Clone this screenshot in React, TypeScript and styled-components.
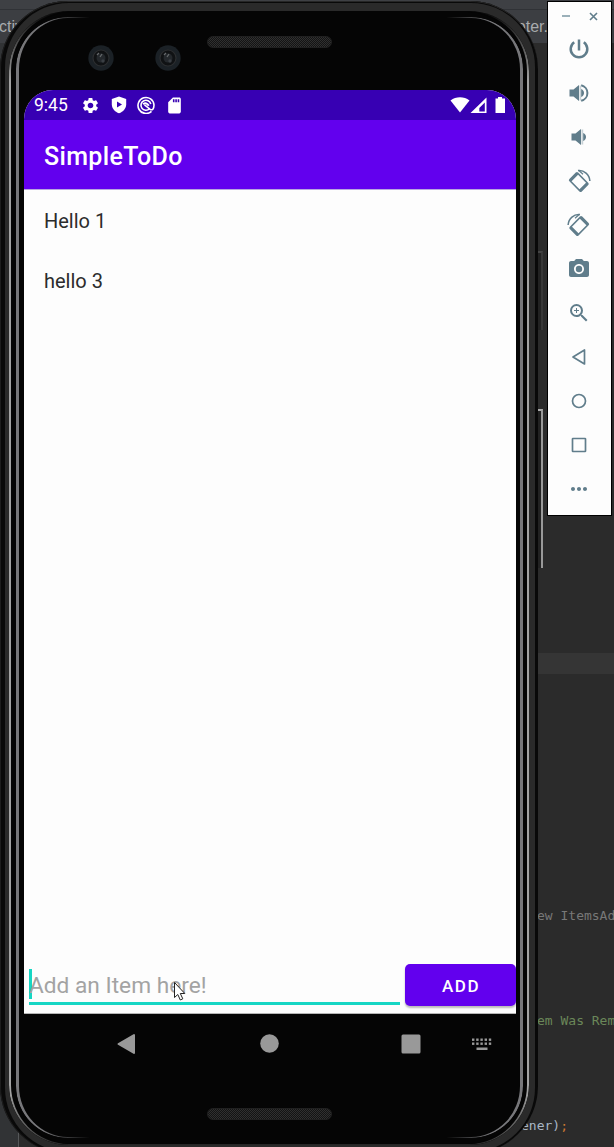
import React from "react";
import styled, { createGlobalStyle } from "styled-components";
import { MdSettings, MdSdCard, MdPhotoCamera, MdZoomIn, MdMoreHoriz } from "react-icons/md";

const GlobalStyle = createGlobalStyle`
  *, *::before, *::after { box-sizing: border-box; }
  body { margin: 0; background: #2b2b2b; }
  svg { display: block; flex: none; }
`;

const Desktop = styled.main`
  position: relative;
  width: 614px;
  height: 1147px;
  overflow: hidden;
  background: #2b2b2b;
  font-family: Roboto, sans-serif;
`;

/* Editor window behind the emulator */
const Editor = styled.div`
  display: flex;
  flex-direction: column;
  height: 100%;
`;

const MenuStrip = styled.div`
  height: 10px;
  background: #3e4044;
  border-bottom: 1px solid #303236;
`;

const TabStrip = styled.div`
  display: flex;
  justify-content: space-between;
  align-items: center;
  height: 33px;
  padding-right: 66px;
  background: #3c3e42;
  color: #a9abad;
  font: 16px/34px "Liberation Sans", sans-serif;
`;

const TabName = styled.span<{ $shift?: number }>`
  margin-left: ${(p) => p.$shift ?? 0}px;
`;

const EditorBody = styled.div`
  display: flex;
  flex: 1;
`;

const Gutter = styled.div`
  flex: none;
  width: 19px;
  background: #313335;
  border-right: 1px solid #555759;
`;

const CodeArea = styled.div`
  flex: 1;
  min-width: 0;
  padding-top: 610px;
  font: 13px/21px "DejaVu Sans Mono", monospace;
  white-space: pre;
`;

const CodeLine = styled.div<{ $indent?: number; $tone?: string; $gap?: number; $active?: boolean }>`
  height: 21px;
  margin-top: ${(p) => p.$gap ?? 0}px;
  padding-left: ${(p) => p.$indent ?? 0}px;
  color: ${(p) => p.$tone ?? "#a9b7c6"};
  background: ${(p) => (p.$active ? "#353535" : "transparent")};
`;

const Semicolon = styled.span`
  color: #cc7832;
`;

/* Phone hardware */
const Phone = styled.section`
  position: absolute;
  left: 0;
  top: 1px;
  width: 538px;
  height: 1153px;
  padding: 2px 3px 2px 5px;
  border-radius: 68px;
  background: #090909;
  box-shadow: inset 1px 0 #1d1d1d, inset 0 1px #262626;
`;

const Rim = styled.div`
  height: 100%;
  padding: 8px 6px 7px 4px;
  border-radius: 64px;
  background: #2a2a2a;
`;

const Edge = styled.div`
  position: relative;
  height: 100%;
  padding: 1px 3px;
  border-radius: 60px;
  background: #050505;

  &::before {
    content: "";
    position: absolute;
    inset: 0;
    border: solid #a3a3a3;
    border-width: 1px 2px;
    border-radius: inherit;
    mask-image: linear-gradient(transparent 0, #0003 14px, #000 70px, #000 1080px, #0007 1122px, #0003 100%);
  }
`;

const Glass = styled.div`
  position: relative;
  display: flex;
  flex-direction: column;
  height: 100%;
  margin: 0 3px 0 4px;
  padding: 0 3px 0 8px;
  border-radius: 56px;
  background: #050505;

  &::before {
    content: "";
    position: absolute;
    inset: 5px 0 6px 0;
    border: solid #77777a;
    border-width: 1px 3px;
    border-radius: 52px;
    mask-image:
      linear-gradient(90deg, #000 26px, transparent 74px, transparent 430px, #000 476px);
  }
`;

const TopBezel = styled.div`
  position: relative;
  height: 78px;
`;

const Lens = styled.svg<{ $x: number }>`
  position: absolute;
  left: ${(p) => p.$x}px;
  top: 33px;
`;

const Grille = styled.div<{ $top: number }>`
  width: 125px;
  height: 12px;
  margin: ${(p) => p.$top}px 0 0 183px;
  border: 1px solid #202020;
  border-radius: 6px;
  background: repeating-conic-gradient(#303030 0 25%, #141414 0 50%) 0 0 / 2px 2px;
`;

/* App screen */
const Screen = styled.div`
  position: relative;
  display: flex;
  flex-direction: column;
  width: 492px;
  height: 924px;
  border-radius: 29px 29px 0 0;
  overflow: hidden;
  background: #fdfdfd;
`;

const StatusBar = styled.div`
  display: flex;
  align-items: center;
  height: 30px;
  padding: 0 9px 0 10px;
  background: #3700b3;
  color: #fff;
`;

const Clock = styled.span`
  width: 47px;
  font-size: 17.5px;
  line-height: 30px;
`;

const StatusIcons = styled.div`
  display: flex;
  align-items: center;
  gap: 9.7px;
`;

const SignalIcons = styled.div`
  display: flex;
  align-items: center;
  margin-left: auto;
`;

const AppBar = styled.header`
  height: 70px;
  padding-left: 20px;
  border-bottom: 1px solid #b9a6e0;
  background: #6200ee;
  color: #fff;
  font-size: 25px;
  font-weight: 500;
  line-height: 73px;
  letter-spacing: 0.35px;
`;

const List = styled.ul`
  flex: 1;
  margin: 0;
  padding: 0 0 0 20px;
  list-style: none;
`;

const Item = styled.li`
  height: 60px;
  color: #2c2c2c;
  font-size: 20px;
  line-height: 63px;
`;

const Composer = styled.div`
  display: flex;
  height: 50px;
  padding-left: 5px;
  border-bottom: 1px solid #b5b5b5;
`;

const Field = styled.div`
  width: 371px;
  height: 41px;
  margin-right: 5px;
  border-bottom: 3px solid #16d6c4;
  color: #a3a3a3;
  font-size: 22.7px;
  line-height: 43px;
  white-space: nowrap;
`;

const Caret = styled.span`
  display: inline-block;
  width: 3px;
  height: 30px;
  margin: 5px -3px 0 0;
  background: #16d6c4;
  vertical-align: top;
`;

const AddButton = styled.button`
  width: 111px;
  height: 42px;
  padding: 1px 0 0 1px;
  border: 0;
  border-radius: 5px;
  background: #6200ee;
  color: #fff;
  font: 500 17px/42px Roboto, sans-serif;
  letter-spacing: 1.5px;
  box-shadow: 0 2px 2px #0004;
`;

const NavBar = styled.nav`
  display: flex;
  align-items: center;
  height: 60px;
  padding-left: 93px;
`;

const NavIcon = styled.svg<{ $gap: number }>`
  margin-right: ${(p) => p.$gap}px;
`;

const Pointer = styled.svg`
  position: absolute;
  left: 173px;
  top: 981px;
`;

const SideKey = styled.div<{ $top: number; $height: number; $lit?: boolean }>`
  position: absolute;
  left: 538px;
  top: ${(p) => p.$top}px;
  width: 5px;
  height: ${(p) => p.$height}px;
  border-right: 2px solid ${(p) => (p.$lit ? "#999" : "#383838")};
  border-top: 2px solid ${(p) => (p.$lit ? "#aaa" : "#444")};
  background: #222;
`;

/* Emulator control strip */
const Controls = styled.aside`
  position: absolute;
  left: 547px;
  top: 1px;
  width: 65px;
  height: 515px;
  border: 1px solid #000;
  background: #fdfdfd;
  color: #607d8b;
`;

const WindowButtons = styled.div`
  display: flex;
  align-items: center;
  gap: 19px;
  height: 25px;
  padding: 3px 0 0 14px;
`;

const ControlButton = styled.div`
  display: flex;
  align-items: center;
  justify-content: center;
  height: 44px;
  padding-right: 1px;
`;

const Camera = ({ x }: { x: number }) => (
  <Lens $x={x} width="26" height="26" viewBox="0 0 26 26">
    <circle cx="13" cy="13" r="12.7" fill="#1b2126" />
    <circle cx="13" cy="13" r="8" fill="#101214" stroke="#2c2e30" strokeWidth="1.2" />
    <circle cx="13" cy="13" r="4.5" fill="#24282c" />
    <path d="M9 10l2-2M12 12l2-3" stroke="#66696b" strokeWidth="1.3" />
    <circle cx="15" cy="16" r="1.7" fill="#3a3f44" />
  </Lens>
);

const Shield = () => (
  <svg width="18" height="18" viewBox="0 0 18 18">
    <path d="M9 .5 16.200 3v5.200c0 4.300-3 7.500-7.200 9.100C4.800 15.700 1.800 12.500 1.800 8.200V3z" fill="#fff" />
    <path d="M7 5.500v6l5-3z" fill="#3700b3" />
  </svg>
);

const Swirl = () => (
  <svg width="18" height="18" viewBox="0 0 18 18" fill="none" stroke="#fff">
    <path d="M14.500 15.300A8 8 0 1 1 17 9c0 4.500-2 5.500-3.800 4.300L7.500 8.800" strokeWidth="1.600" />
    <path d="M12.500 12.800A5 5 0 1 1 13.800 8" strokeWidth="1.600" />
    <path d="M6.200 8.200c2-1.700 4-1 5.600 1.600" strokeWidth="2" />
  </svg>
);

const Power = () => (
  <svg width="24" height="24" viewBox="0 0 24 24" fill="none" stroke="currentColor" strokeWidth="2.500">
    <path d="M12 2.500v11" />
    <path d="M7.200 5.200a8.300 8.300 0 1 0 9.600 0" />
  </svg>
);

const Volume = ({ loud }: { loud?: boolean }) => (
  <svg width="24" height="24" viewBox="0 0 24 24" fill="currentColor">
    <g transform={loud ? undefined : "translate(2 0)"}>
      <path d="M2.500 8.500h4L12 4v16l-5.500-4.500h-4z" />
      <path d="M12.500 4.500h1.700v15h-1.700z" opacity=".35" />
      <path d="M14.200 8c2 .8 2.800 2.300 2.800 4s-.8 3.200-2.800 4z" />
      {loud && <path d="M14.200 4.200a8 8 0 0 1 0 15.600" fill="none" stroke="currentColor" strokeWidth="2" />}
    </g>
  </svg>
);

const Rotate = ({ right }: { right?: boolean }) => (
  <svg width="26" height="26" viewBox="0 0 26 26">
    <g transform={right ? "translate(25.500 1) scale(-1 1)" : "translate(.5 1)"}>
      <path
        transform="rotate(-45 12.300 13)"
        fill="currentColor"
        fillRule="evenodd"
        d="M7.800 4.200h9q1.700 0 1.700 1.700v14.200q0 1.700-1.700 1.700h-9q-1.700 0-1.700-1.700V5.900q0-1.700 1.700-1.700zM7.700 7.400v11.200h9.200V7.400z"
      />
      <path d="M11.500 1.600C17.500.9 23 5.400 23.400 12" fill="none" stroke="currentColor" strokeWidth="1.500" />
      <path d="M12.300 1.500l4.200 3.700" stroke="currentColor" strokeWidth="1.200" />
    </g>
  </svg>
);

const Outline = ({ children }: { children: React.ReactNode }) => (
  <svg width="18" height="18" viewBox="0 0 18 18" fill="none" stroke="currentColor" strokeWidth="1.700" strokeLinejoin="round">
    {children}
  </svg>
);

const keyDots = [0, 1, 2, 3, 4].flatMap((c) => [0, 1].map((r) => [c * 4.2, r * 4]));

export default function App() {
  return (
    <Desktop>
      <GlobalStyle />
      <Editor>
        <MenuStrip />
        <TabStrip>
          <TabName $shift={-1}>ctiv</TabName>
          <TabName>oter.</TabName>
        </TabStrip>
        <EditorBody>
          <Gutter />
          <CodeArea>
            <CodeLine $active />
            <CodeLine $gap={231} $indent={518} $tone="#787878">ew ItemsAd</CodeLine>
            <CodeLine $gap={84} $indent={518} $tone="#6a8759">em Was Rem</CodeLine>
            <CodeLine $gap={84} $indent={502}>ener)<Semicolon>;</Semicolon></CodeLine>
          </CodeArea>
        </EditorBody>
      </Editor>

      <SideKey $top={251} $height={79} />
      <SideKey $top={409} $height={159} $lit />

      <Phone>
        <Rim>
          <Edge>
            <Glass>
              <TopBezel>
                <Camera x={64} />
                <Camera x={131} />
                <Grille $top={24} />
              </TopBezel>
              <Screen>
                <StatusBar>
                  <Clock>9:45</Clock>
                  <StatusIcons>
                    <MdSettings size={19} />
                    <Shield />
                    <Swirl />
                    <MdSdCard size={19} />
                  </StatusIcons>
                  <SignalIcons>
                    <svg width="57" height="18" viewBox="0 0 57 18" fill="#fff">
                      <path d="M.5 4.500C6 .2 14 .2 19.500 4.500L10 16.500z" />
                      <path fillRule="evenodd" d="M36.500 1.500v15.500h-16zM34.800 6.500l-5.500 5.500v3.500h5.500z" />
                      <path d="M48 1h4v1.500h3V17H45.500V2.500H48z" />
                    </svg>
                  </SignalIcons>
                </StatusBar>
                <AppBar>SimpleToDo</AppBar>
                <List>
                  <Item>Hello 1</Item>
                  <Item>hello 3</Item>
                </List>
                <Composer>
                  <Field><Caret />Add an Item here!</Field>
                  <AddButton>ADD</AddButton>
                </Composer>
              </Screen>
              <NavBar>
                <NavIcon $gap={124} width="19" height="22" viewBox="0 0 19 22">
                  <path d="M1.500 11 17 2v18z" fill="#999" stroke="#999" strokeWidth="2" strokeLinejoin="round" />
                </NavIcon>
                <NavIcon $gap={121} width="20" height="20" viewBox="0 0 20 20">
                  <circle cx="9.500" cy="9.500" r="9.300" fill="#999" />
                </NavIcon>
                <NavIcon $gap={51} width="20" height="20" viewBox="0 0 20 20">
                  <rect x=".5" y=".5" width="19" height="19" rx="1.500" fill="#999" />
                </NavIcon>
                <NavIcon $gap={0} width="20" height="13" viewBox="0 0 20 13" fill="#999">
                  {keyDots.map(([x, y]) => (
                    <rect key={`${x}-${y}`} x={x} y={y + 0.5} width="2.400" height="2.400" />
                  ))}
                  <rect x="4.500" y="9.500" width="11" height="2.500" />
                </NavIcon>
              </NavBar>
              <Grille $top={34} />
            </Glass>
          </Edge>
        </Rim>
      </Phone>

      <Pointer width="14" height="21" viewBox="0 0 14 21">
        <path d="M1.500 1.500v15l3.300-3 2.500 5.500 2.500-1.200-2.500-5.300h4.500z" fill="#fff" stroke="#222" />
      </Pointer>

      <Controls>
        <WindowButtons>
          <svg width="8" height="8" viewBox="0 0 8 8"><path d="M0 4h8" stroke="#9bb0b9" strokeWidth="2" /></svg>
          <svg width="9" height="9" viewBox="0 0 9 9"><path d="M1 1l7 7M8 1l-7 7" stroke="currentColor" strokeWidth="1.600" /></svg>
        </WindowButtons>
        <ControlButton><Power /></ControlButton>
        <ControlButton><Volume loud /></ControlButton>
        <ControlButton><Volume /></ControlButton>
        <ControlButton><Rotate /></ControlButton>
        <ControlButton><Rotate right /></ControlButton>
        <ControlButton><MdPhotoCamera size={24} /></ControlButton>
        <ControlButton><MdZoomIn size={24} /></ControlButton>
        <ControlButton><Outline><path d="M3 9 14.500 2v14z" /></Outline></ControlButton>
        <ControlButton><Outline><circle cx="9" cy="9" r="6.500" /></Outline></ControlButton>
        <ControlButton><Outline><rect x="2.500" y="2.500" width="13" height="13" rx=".5" /></Outline></ControlButton>
        <ControlButton><MdMoreHoriz size={24} /></ControlButton>
      </Controls>
    </Desktop>
  );
}
